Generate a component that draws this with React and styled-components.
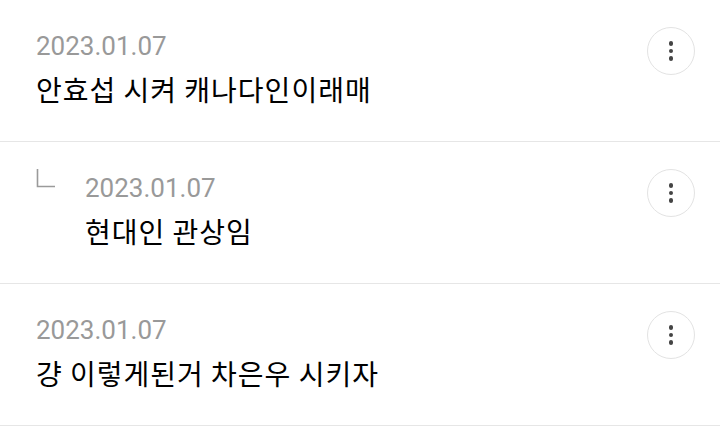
import React from 'react';
import styled, { createGlobalStyle } from 'styled-components';

const GlobalStyle = createGlobalStyle`
    html, body {
        margin: 0;
        padding: 0;
        background: #fff;
    }
    body {
        font-family: Roboto, "Noto Sans CJK KR", sans-serif;
    }
`;

const List = styled.ul`
    list-style: none;
    margin: 0;
    padding: 0;
    width: 720px;
`;

const Row = styled.li`
    display: flex;
    align-items: flex-start;
    height: 141px;
    box-sizing: content-box;
    padding: 0 25px 0 36px;
    border-bottom: 1px solid #e6e6e6;
`;

const ReplyMark = styled.div`
    width: 49px;
    flex-shrink: 0;
    padding-top: 26px;

    svg {
        display: block;
    }
`;

const Body = styled.div`
    flex: 1;
    display: flex;
    flex-direction: column;
    padding-top: 31px;
`;

const Date = styled.span`
    font-family: Roboto, sans-serif;
    font-size: 26px;
    line-height: 30px;
    color: #999;
`;

const Text = styled.p`
    margin: 10px 0 0;
    font-family: "Noto Sans CJK KR", sans-serif;
    font-size: 28px;
    line-height: 36px;
    letter-spacing: 1px;
    color: #000;
`;

const MoreButton = styled.button`
    width: 48px;
    height: 48px;
    margin-top: 27px;
    flex-shrink: 0;
    border: 1px solid #e3e3e3;
    border-radius: 50%;
    background: #fff;
    padding: 0;
    display: flex;
    flex-direction: column;
    align-items: center;
    justify-content: center;
    gap: 3px;
`;

const Dot = styled.span`
    width: 4.5px;
    height: 4.5px;
    border-radius: 50%;
    background: #444;
`;

const comments = [
    { id: 1, date: '2023.01.07', text: '안효섭 시켜 캐나다인이래매', reply: false },
    { id: 2, date: '2023.01.07', text: '현대인 관상임', reply: true },
    { id: 3, date: '2023.01.07', text: '걍 이렇게된거 차은우 시키자', reply: false },
];

export default function App(){
    return(
        <>
            <GlobalStyle />
            <List>
                {comments.map((c) => (
                    <Row key={c.id}>
                        {c.reply && (
                            <ReplyMark>
                                <svg width="20" height="20" viewBox="0 0 20 20">
                                    <path d="M1.5 1v17.5H19" fill="none" stroke="#9a9a9a" strokeWidth="1.6" />
                                </svg>
                            </ReplyMark>
                        )}
                        <Body>
                            <Date>{c.date}</Date>
                            <Text>{c.text}</Text>
                        </Body>
                        <MoreButton aria-label="더보기">
                            <Dot />
                            <Dot />
                            <Dot />
                        </MoreButton>
                    </Row>
                ))}
            </List>
        </>
    )
}
